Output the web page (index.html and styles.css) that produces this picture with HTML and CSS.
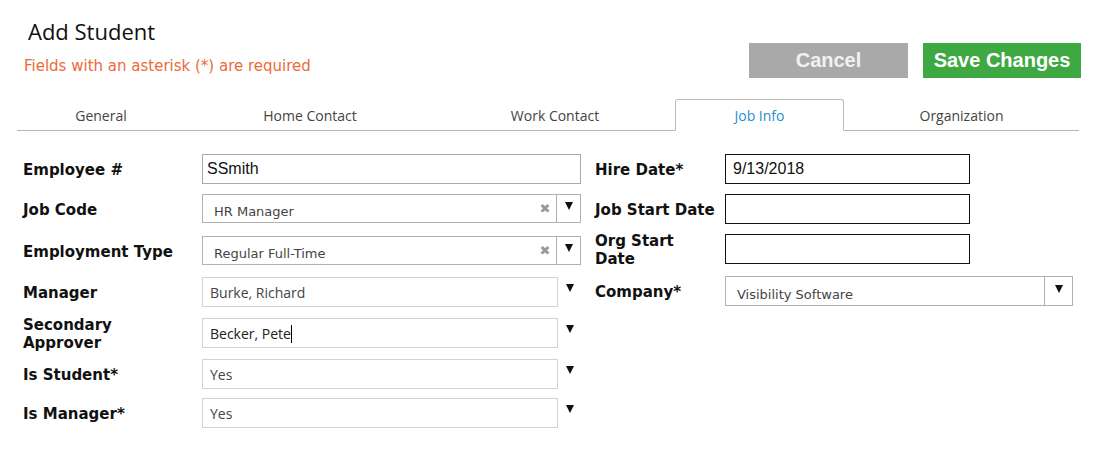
FILE: index.html
```html
<!DOCTYPE html>
<html>
<head>
<meta charset="utf-8">
<link rel="stylesheet" href="styles.css">
</head>
<body>
<div class="page">
  <div class="header">
    <div class="titles">
      <h1 class="title">Add Student</h1>
      <div class="required">Fields with an asterisk (*) are required</div>
    </div>
    <div class="actions">
      <button class="btn btn-cancel">Cancel</button>
      <button class="btn btn-save">Save Changes</button>
    </div>
  </div>

  <div class="tabs">
    <div class="tab tab-general">General</div>
    <div class="tab tab-home">Home Contact</div>
    <div class="tab tab-work">Work Contact</div>
    <div class="tab tab-job active">Job Info</div>
    <div class="tab tab-org">Organization</div>
  </div>

  <div class="form">
    <div class="col col-left">
      <div class="row">
        <div class="label">Employee #</div>
        <div class="text-input arial">SSmith</div>
      </div>
      <div class="row">
        <div class="label">Job Code</div>
        <div class="combo">
          <span class="combo-value">HR Manager</span>
          <span class="clear">&#x2716;</span>
          <span class="combo-arrow"><span class="tri"></span></span>
        </div>
      </div>
      <div class="row">
        <div class="label">Employment Type</div>
        <div class="combo">
          <span class="combo-value">Regular Full-Time</span>
          <span class="clear">&#x2716;</span>
          <span class="combo-arrow"><span class="tri"></span></span>
        </div>
      </div>
      <div class="row">
        <div class="label">Manager</div>
        <div class="auto">
          <div class="auto-input">Burke, Richard</div>
          <span class="auto-arrow"><span class="tri"></span></span>
        </div>
      </div>
      <div class="row">
        <div class="label two">Secondary<br>Approver</div>
        <div class="auto">
          <div class="auto-input dark">Becker, Pete<span class="caret"></span></div>
          <span class="auto-arrow"><span class="tri"></span></span>
        </div>
      </div>
      <div class="row">
        <div class="label">Is Student*</div>
        <div class="auto">
          <div class="auto-input">Yes</div>
          <span class="auto-arrow"><span class="tri"></span></span>
        </div>
      </div>
      <div class="row">
        <div class="label">Is Manager*</div>
        <div class="auto">
          <div class="auto-input">Yes</div>
          <span class="auto-arrow"><span class="tri"></span></span>
        </div>
      </div>
    </div>

    <div class="col col-right">
      <div class="row r">
        <div class="label">Hire Date*</div>
        <div class="date-input">9/13/2018</div>
      </div>
      <div class="row r">
        <div class="label">Job Start Date</div>
        <div class="date-input"></div>
      </div>
      <div class="row r">
        <div class="label two">Org Start<br>Date</div>
        <div class="date-input"></div>
      </div>
      <div class="row r company">
        <div class="label">Company*</div>
        <div class="combo wide">
          <span class="combo-value">Visibility Software</span>
          <span class="combo-arrow"><span class="tri"></span></span>
        </div>
      </div>
    </div>
  </div>
</div>
</body>
</html>
```

FILE: styles.css
```css
* { box-sizing: border-box; }
html, body { margin: 0; padding: 0; background: #fff; }
body { font-family: "DejaVu Sans", Verdana, sans-serif; color: #222; }

.page { width: 1112px; height: 453px; overflow: hidden; }

.header {
  display: flex;
  justify-content: space-between;
  align-items: flex-start;
  padding: 0 31px 0 24px;
  height: 99px;
}
.title {
  margin: 16px 0 0 4px;
  font-family: "Open Sans", sans-serif;
  font-weight: 400;
  font-size: 22px;
  line-height: 30px;
  color: #111;
}
.required {
  margin-top: 11px;
  font-family: "DejaVu Sans", Verdana, sans-serif;
  font-size: 15px;
  color: #ec6a3a;
  line-height: 18px;
}
.actions { display: flex; gap: 15px; margin-top: 43px; }
.btn {
  border: none;
  height: 35px;
  font-family: "Liberation Sans", Arial, sans-serif;
  font-weight: bold;
  font-size: 20px;
  color: #fff;
  padding: 0;
}
.btn-cancel { width: 159px; background: #a9a9a9; color: #f1f1f1; }
.btn-save { width: 158px; background: #3ea843; }

.tabs {
  display: flex;
  margin: 0 33px 0 17px;
  height: 32px;
  border-bottom: 1px solid #b5b5b5;
}
.tab {
  font-family: "Open Sans", sans-serif;
  font-size: 14px;
  color: #444;
  text-align: center;
  line-height: 33px;
}
.tab-general { width: 168px; }
.tab-home { width: 250px; }
.tab-work { width: 240px; }
.tab-job { width: 169px; }
.tab-org { width: 235px; }
.tab.active {
  color: #2a8ec8;
  border: 1px solid #bcbcbc;
  border-bottom: 1px solid #fff;
  border-radius: 3px 3px 0 0;
  margin-bottom: -1px;
  height: 32px;
  line-height: 31px;
  background: #fff;
}

.form {
  display: flex;
  padding: 23px 0 0 23px;
}
.col { display: flex; flex-direction: column; }
.col-left { width: 572px; gap: 11px; }
.col-right { gap: 10px; }
.row { display: flex; align-items: center; height: 30px; }
.label {
  width: 179px;
  font-family: "DejaVu Sans", Verdana, sans-serif;
  font-weight: bold;
  font-size: 15px;
  color: #111;
  line-height: 18px;
  padding-top: 2px;
}
.r .label { width: 130px; }
.col-left .row:nth-child(2) { margin-top: -1px; height: 29px; }
.col-left .row:nth-child(3) { margin-top: 2px; height: 29px; }
.col-left .row:nth-child(4) { margin-top: 1px; }
.col-left .row:nth-child(7) { margin-top: -2px; }
.r.company { margin-top: 2px; }

.text-input {
  width: 379px;
  height: 30px;
  border: 1px solid #a9a9a9;
  padding: 3px 0 0 4px;
  font-size: 16px;
  line-height: 22px;
  color: #111;
}
.arial { font-family: "Liberation Sans", Arial, sans-serif; }

.combo {
  width: 379px;
  height: 29px;
  border: 1px solid #b1b1b1;
  display: flex;
  align-items: center;
}
.combo.wide { width: 348px; height: 30px; }
.combo-value {
  flex: 1;
  padding: 6px 0 0 11px;
  font-family: "DejaVu Sans", Verdana, sans-serif;
  font-size: 13px;
  color: #444;
}
.clear {
  width: 22px;
  color: #999;
  font-size: 13px;
  font-weight: bold;
  text-align: center;
  font-family: "DejaVu Sans", sans-serif;
}
.combo-arrow {
  width: 24px;
  height: 100%;
  border-left: 1px solid #b1b1b1;
  display: flex;
  align-items: center;
  justify-content: center;
  padding-bottom: 5px;
}
.wide .combo-arrow { width: 28px; }
.tri {
  width: 0;
  height: 0;
  border-left: 4px solid transparent;
  border-right: 4px solid transparent;
  border-top: 8px solid #111;
}

.auto { display: flex; align-items: center; width: 379px; }
.auto-input {
  width: 356px;
  height: 30px;
  border: 1px solid #d2d2d2;
  padding: 0 0 0 7px;
  font-family: "Open Sans", sans-serif;
  font-size: 14px;
  line-height: 29px;
  color: #444;
}
.auto-input.dark { color: #222; }
.caret {
  display: inline-block;
  width: 1px;
  height: 18px;
  background: #000;
  vertical-align: -4px;
}
.auto-arrow {
  width: 23px;
  display: flex;
  justify-content: center;
  padding-bottom: 8px;
}

.date-input {
  width: 245px;
  height: 30px;
  border: 1px solid #111;
  padding: 3px 0 0 7px;
  font-family: "Liberation Sans", Arial, sans-serif;
  font-size: 16px;
  line-height: 22px;
  color: #111;
}
```
